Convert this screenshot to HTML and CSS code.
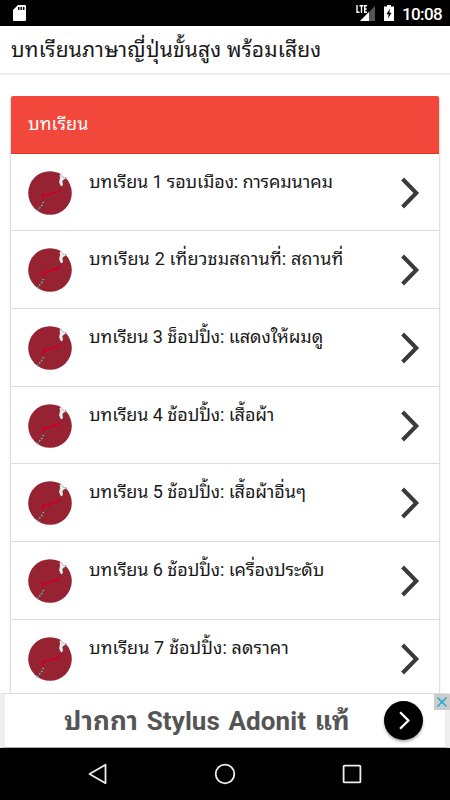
FILE: index.html
```html
<!DOCTYPE html>
<html lang="th">
<head>
    <meta charset="UTF-8">
    <meta name="viewport" content="width=device-width, initial-scale=1.0">
    <title>บทเรียนภาษาญี่ปุ่นขั้นสูง พร้อมเสียง</title>
    <link rel="stylesheet" href="styles.css">
</head>
<body>
    <!-- shared icons -->
    <svg class="icon-defs" width="0" height="0">
        <symbol id="japan" viewBox="0 0 44 44">
            <circle cx="22" cy="22" r="21.8" fill="#962232"/>
            <path d="M33 0 L33 4 L35 6 L38 7 L40 6 L44 2 Z" fill="#fff"/>
            <path d="M31.5 4 L33 3 L35 6 L39 7 L36 8.5 L34.5 10 L35 14 L33 16 L31 11 L32 7 Z" fill="#eee" stroke="#665" stroke-width=".7" stroke-dasharray="1 1.5"/>
            <path d="M31 14 L34 16 L33.5 20 L30 23 L26 24 L21 25.5 L17 27 L16 31 L14 31 L12.5 26 L13 23 L16 21.5 L20 22 L24 19.5 L28 19.5 L31 17 Z" fill="#c40626" stroke="#5b4a4c" stroke-width="1" stroke-dasharray="2 .8"/>
            <path d="M15.5 31 L13.5 35 L9 40" fill="none" stroke="#5b4a4c" stroke-width="1.6"/>
            <path d="M15.5 31 L13.5 35 L9 40" fill="none" stroke="#c5b8b8" stroke-width="1.2" stroke-dasharray="1.2 2"/>
        </symbol>
        <symbol id="chevron" viewBox="0 0 20 32">
            <path d="M2.6 2 L16.3 16 L2.6 30" fill="none" stroke="#3a3a3a" stroke-width="4"/>
        </symbol>
    </svg>

    <div class="status-bar">
        <svg class="sd-icon" width="14" height="17" viewBox="0 0 14 17">
            <path d="M5 0 H12 Q13 0 13 1 V15 Q13 16 12 16 H1 Q0 16 0 15 V5 Z" fill="#fff"/>
            <path d="M5.7 2 V5 M8.2 2 V5 M10.7 2 V5" stroke="#000" stroke-width="1.5"/>
        </svg>
        <svg class="signal-icon" width="20" height="17" viewBox="0 0 20 17">
            <path d="M4 16 L19 1 V16 Z" fill="#555"/>
            <path d="M4 16 L13 7 V16 Z" fill="#fff"/>
            <path d="M0 0 H12 V8 H0 Z" fill="#000"/>
            <path d="M1 0 V7.2 H3.5 M3.5 .8 H7.5 M5.5 .8 V8 M11 .8 H8.7 V7.2 H11 M8.7 4 H10.7" fill="none" stroke="#fff" stroke-width="1.4"/>
        </svg>
        <svg class="battery-icon" width="10" height="16" viewBox="0 0 10 16">
            <path d="M3 0 H7 V1.5 H10 V16 H0 V1.5 H3 Z" fill="#fff"/>
            <path d="M6 3.5 L2.5 9.3 H4.6 L4 13.5 L7.6 7.7 H5.4 Z" fill="#000"/>
        </svg>
        <span class="clock">10:08</span>
    </div>

    <header class="app-bar">
        <h1>บทเรียนภาษาญี่ปุ่นขั้นสูง พร้อมเสียง</h1>
    </header>

    <main class="content">
        <div class="card">
            <h2 class="card-header">บทเรียน</h2>
            <ul class="lessons">
                <li class="lesson">
                    <svg class="flag"><use href="#japan"/></svg>
                    <span class="title">บทเรียน 1 รอบเมือง: การคมนาคม</span>
                    <svg class="arrow"><use href="#chevron"/></svg>
                </li>
                <li class="lesson">
                    <svg class="flag"><use href="#japan"/></svg>
                    <span class="title">บทเรียน 2 เที่ยวชมสถานที่: สถานที่</span>
                    <svg class="arrow"><use href="#chevron"/></svg>
                </li>
                <li class="lesson">
                    <svg class="flag"><use href="#japan"/></svg>
                    <span class="title">บทเรียน 3 ช็อปปิ้ง: แสดงให้ผมดู</span>
                    <svg class="arrow"><use href="#chevron"/></svg>
                </li>
                <li class="lesson">
                    <svg class="flag"><use href="#japan"/></svg>
                    <span class="title">บทเรียน 4 ช้อปปิ้ง: เสื้อผ้า</span>
                    <svg class="arrow"><use href="#chevron"/></svg>
                </li>
                <li class="lesson">
                    <svg class="flag"><use href="#japan"/></svg>
                    <span class="title">บทเรียน 5 ช้อปปิ้ง: เสื้อผ้าอื่นๆ</span>
                    <svg class="arrow"><use href="#chevron"/></svg>
                </li>
                <li class="lesson">
                    <svg class="flag"><use href="#japan"/></svg>
                    <span class="title">บทเรียน 6 ช้อปปิ้ง: เครื่องประดับ</span>
                    <svg class="arrow"><use href="#chevron"/></svg>
                </li>
                <li class="lesson">
                    <svg class="flag"><use href="#japan"/></svg>
                    <span class="title">บทเรียน 7 ช้อปปิ้ง: ลดราคา</span>
                    <svg class="arrow"><use href="#chevron"/></svg>
                </li>
            </ul>
        </div>
    </main>

    <div class="ad">
        <span class="ad-text">ปากกา Stylus Adonit แท้</span>
        <span class="ad-go">
            <svg width="39" height="39" viewBox="0 0 40 40">
                <path d="M16.5 11.5 L25 20 L16.5 28.5" fill="none" stroke="#fff" stroke-width="2.4"/>
            </svg>
        </span>
        <span class="ad-close">
            <svg width="16" height="16" viewBox="0 0 16 16">
                <path d="M3.5 3.5 L12.5 12.5 M12.5 3.5 L3.5 12.5" stroke="#15a9cf" stroke-width="1.4"/>
            </svg>
        </span>
    </div>

    <nav class="nav-bar">
        <svg width="20" height="22" viewBox="0 0 20 22">
            <path d="M17.5 1.8 V20.2 L1.5 11 Z" fill="none" stroke="#eee" stroke-width="1.8" stroke-linejoin="round"/>
        </svg>
        <svg width="22" height="22" viewBox="0 0 22 22">
            <circle cx="11" cy="11" r="9.3" fill="none" stroke="#eee" stroke-width="1.8"/>
        </svg>
        <svg width="20" height="22" viewBox="0 0 20 22">
            <rect x="1.6" y="2.6" width="16.8" height="16.8" rx="1" fill="none" stroke="#eee" stroke-width="1.8"/>
        </svg>
    </nav>
</body>
</html>
```
FILE: styles.css
```css
* {
    box-sizing: border-box;
}
body {
    margin: 0;
    height: 800px;
    display: flex;
    flex-direction: column;
    overflow: hidden;
    background-color: #fff;
    color: #1a1a1a;
    font-family: Roboto, "Noto Sans Thai Looped", "Noto Looped Thai", "Droid Sans Thai", Loma, Waree, Garuda, sans-serif;
}
svg {
    display: block;
    flex: none;
}
.icon-defs {
    position: absolute;
}
.status-bar {
    flex: none;
    display: flex;
    align-items: flex-start;
    height: 26px;
    padding: 5px 8px 0 13px;
    background-color: #000;
    color: #fff;
}
.signal-icon {
    margin-left: auto;
}
.battery-icon {
    margin: 0 8px 0 8px;
}
.clock {
    font-size: 17px;
    font-weight: 500;
    line-height: 18px;
    width: 40px;
    white-space: nowrap;
    letter-spacing: -0.6px;
}
.app-bar {
    flex: none;
    height: 49px;
    padding: 0 11px;
    border-bottom: 2px solid #ededed;
}
.app-bar h1 {
    margin: 0;
    font-size: 21px;
    font-weight: 400;
    line-height: 48px;
    white-space: nowrap;
    letter-spacing: 0.18px;
}
.content {
    flex: 1;
    min-height: 0;
    overflow: hidden;
    padding: 21px 10px 0;
}
.card {
    border: 1px solid #e0e0e0;
    border-top: none;
    border-radius: 3px;
    overflow: hidden;
    box-shadow: 0 1px 2px rgba(0, 0, 0, 0.12);
}
.card-header {
    height: 57.6px;
    margin: 0;
    padding: 0 17px;
    background-color: #f1483b;
    border-bottom: 1px solid #e9301f;
    color: #fff;
    font-size: 18px;
    font-weight: 400;
    line-height: 56px;
    letter-spacing: 0.1px;
}
.lessons {
    margin: 0;
    padding: 0;
    list-style: none;
}
.lesson {
    display: flex;
    height: 77.7px;
    padding: 17px 19px 0 17px;
    border-bottom: 1px solid #ddd;
}
.flag {
    width: 44px;
    height: 44px;
}
.title {
    flex: 1;
    margin-left: 17px;
    font-size: 18px;
    line-height: 22px;
    white-space: nowrap;
    letter-spacing: -0.08px;
}
.lesson:nth-child(1) .title {
    letter-spacing: -0.13px;
}
.lesson:nth-child(2) .title {
    letter-spacing: 0.18px;
}
.lesson:nth-child(7) .title {
    letter-spacing: 0.1px;
}
.arrow {
    width: 20px;
    height: 32px;
    margin-top: 6px;
}
.ad {
    position: relative;
    flex: none;
    display: flex;
    align-items: center;
    height: 55px;
    padding: 0 22px 0 59px;
    border: 5px solid #eee;
    border-width: 1px 5px;
    border-top-color: #ddd;
    border-bottom-color: #aaa;
    background-color: #fff;
}
.ad-text {
    flex: 1;
    color: #555;
    font-size: 26px;
    font-weight: 700;
    line-height: 52px;
    white-space: nowrap;
    letter-spacing: 0.1px;
    word-spacing: 2px;
}
.ad-go {
    width: 39px;
    height: 39px;
    border-radius: 50%;
    background-color: #000;
    box-shadow: 0 2px 3px rgba(0, 0, 0, 0.3);
}
.ad-close {
    position: absolute;
    top: 0;
    right: -5px;
    background-color: #ccc;
}
.nav-bar {
    flex: none;
    display: flex;
    justify-content: space-between;
    height: 52px;
    padding: 15px 88px 0 88px;
    background-color: #000;
}
```
